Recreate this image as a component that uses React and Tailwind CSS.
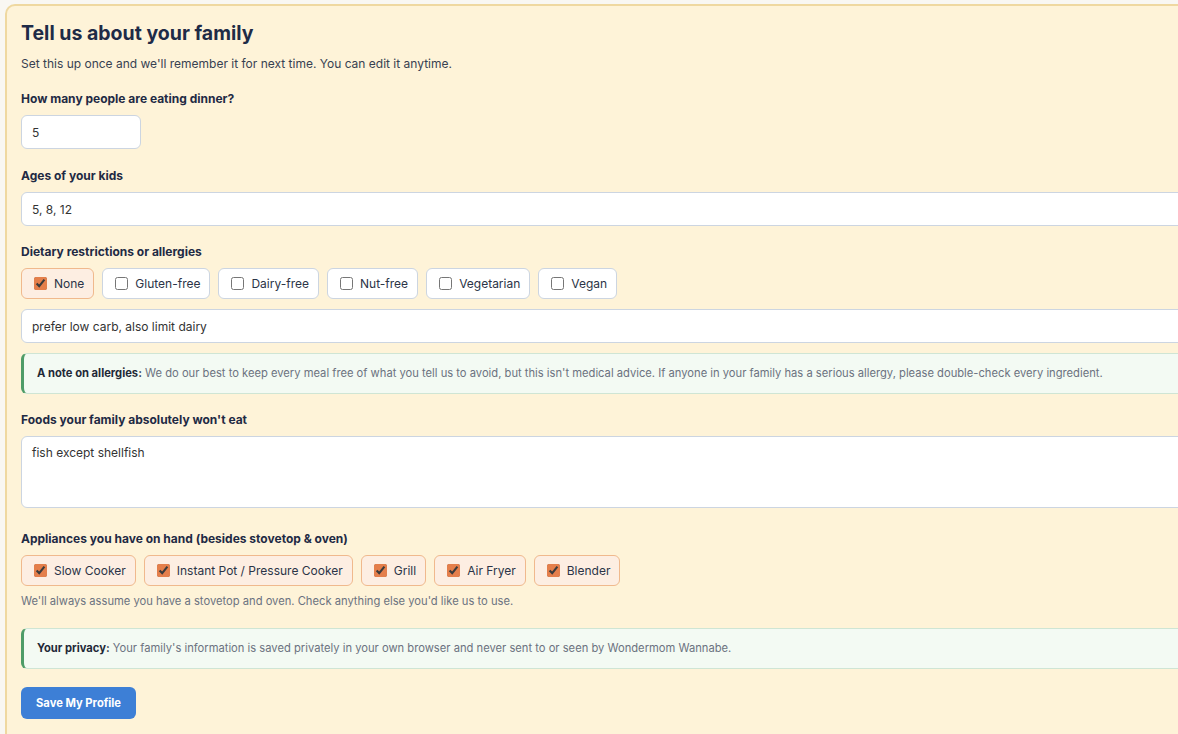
import React, { useState } from 'react';

const Chip = ({ label, checked, onToggle }) => (
  <label
    className={
      'flex h-[31px] cursor-pointer items-center gap-[7px] rounded-md border pl-3 pr-[9px] text-[12px] text-[#2b3447] ' +
      (checked ? 'border-[#f0b98d] bg-[#fdeee2]' : 'border-[#ccd5e1] bg-white')
    }
  >
    <input
      type="checkbox"
      checked={checked}
      onChange={onToggle}
      className="m-0 h-[13px] w-[13px] accent-[#e47f4b]"
    />
    <span>{label}</span>
  </label>
);

const Note = ({ title, children }) => (
  <div className="rounded-md border border-l-[3px] border-[#cfe5d4] border-l-[#4e9c68] bg-[#f3faf3] py-[12px] pl-[13px] pr-4 text-[11.2px] leading-[15px] text-[#6b7280]">
    <span className="font-bold text-[#1f2937]">{title}</span> {children}
  </div>
);

const Label = ({ children }) => (
  <div className="mb-[6px] text-[12px] font-bold leading-5 text-[#1f2a44]">{children}</div>
);

const diets = ['None', 'Gluten-free', 'Dairy-free', 'Nut-free', 'Vegetarian', 'Vegan'];
const appliances = ['Slow Cooker', 'Instant Pot / Pressure Cooker', 'Grill', 'Air Fryer', 'Blender'];

export default function App() {
  const [people, setPeople] = useState('5');
  const [ages, setAges] = useState('5, 8, 12');
  const [dietNotes, setDietNotes] = useState('prefer low carb, also limit dairy');
  const [wontEat, setWontEat] = useState('fish except shellfish');
  const [diet, setDiet] = useState({ None: true });
  const [apps, setApps] = useState({
    'Slow Cooker': true,
    'Instant Pot / Pressure Cooker': true,
    Grill: true,
    'Air Fryer': true,
    Blender: true,
  });

  const inputCls =
    'block h-[34px] w-full rounded-md border border-[#ccd5e1] bg-white px-[10px] text-[12px] text-[#333] outline-none';

  return (
    <div
      className="h-[734px] w-[1178px] overflow-hidden bg-[#f9f7f2] pl-[5px] pt-[4px]"
      style={{ fontFamily: 'Inter, "Noto Sans", sans-serif' }}
    >
      <div className="h-[760px] w-[1300px] rounded-[10px] border-2 border-[#efd8a0] bg-[#fef3d8] pl-[14px] pr-5 pt-[13px]">
        <h2 className="text-[19.5px] font-bold leading-7 text-[#1e2b47]">Tell us about your family</h2>
        <p className="mt-[7px] text-[12px] leading-5 text-[#374151]">
          Set this up once and we'll remember it for next time. You can edit it anytime.
        </p>

        <div className="mt-[15px]">
          <Label>How many people are eating dinner?</Label>
          <input className={inputCls + ' !w-[120px]'} value={people} onChange={(e) => setPeople(e.target.value)} />
        </div>

        <div className="mt-[17px]">
          <Label>Ages of your kids</Label>
          <input className={inputCls} value={ages} onChange={(e) => setAges(e.target.value)} />
        </div>

        <div className="mt-[16px]">
          <Label>Dietary restrictions or allergies</Label>
          <div className="flex gap-2">
            {diets.map((d) => (
              <Chip key={d} label={d} checked={!!diet[d]} onToggle={() => setDiet({ ...diet, [d]: !diet[d] })} />
            ))}
          </div>
          <input className={inputCls + ' mt-[10px]'} value={dietNotes} onChange={(e) => setDietNotes(e.target.value)} />
          <div className="mt-[10px]">
            <Note title="A note on allergies:">
              We do our best to keep every meal free of what you tell us to avoid, but this isn't medical advice. If
              anyone in your family has a serious allergy, please double-check every ingredient.
            </Note>
          </div>
        </div>

        <div className="mt-[16px]">
          <Label>Foods your family absolutely won't eat</Label>
          <textarea
            className="block h-[72px] w-full resize-none rounded-md border border-[#ccd5e1] bg-white px-[10px] py-[8px] text-[12px] leading-4 text-[#333] outline-none"
            value={wontEat}
            onChange={(e) => setWontEat(e.target.value)}
          />
        </div>

        <div className="mt-[21px]">
          <Label>Appliances you have on hand (besides stovetop &amp; oven)</Label>
          <div className="flex gap-2">
            {appliances.map((a) => (
              <Chip key={a} label={a} checked={!!apps[a]} onToggle={() => setApps({ ...apps, [a]: !apps[a] })} />
            ))}
          </div>
          <p className="mt-[7px] text-[11.2px] leading-4 text-[#6b7280]">
            We'll always assume you have a stovetop and oven. Check anything else you'd like us to use.
          </p>
        </div>

        <div className="mt-[19px]">
          <Note title="Your privacy:">
            Your family's information is saved privately in your own browser and never sent to or seen by Wondermom
            Wannabe.
          </Note>
        </div>

        <button className="mt-[18px] h-[32px] rounded-md bg-[#3d7fd6] px-[15px] text-[11.2px] font-bold text-white">
          Save My Profile
        </button>
      </div>
    </div>
  );
}
